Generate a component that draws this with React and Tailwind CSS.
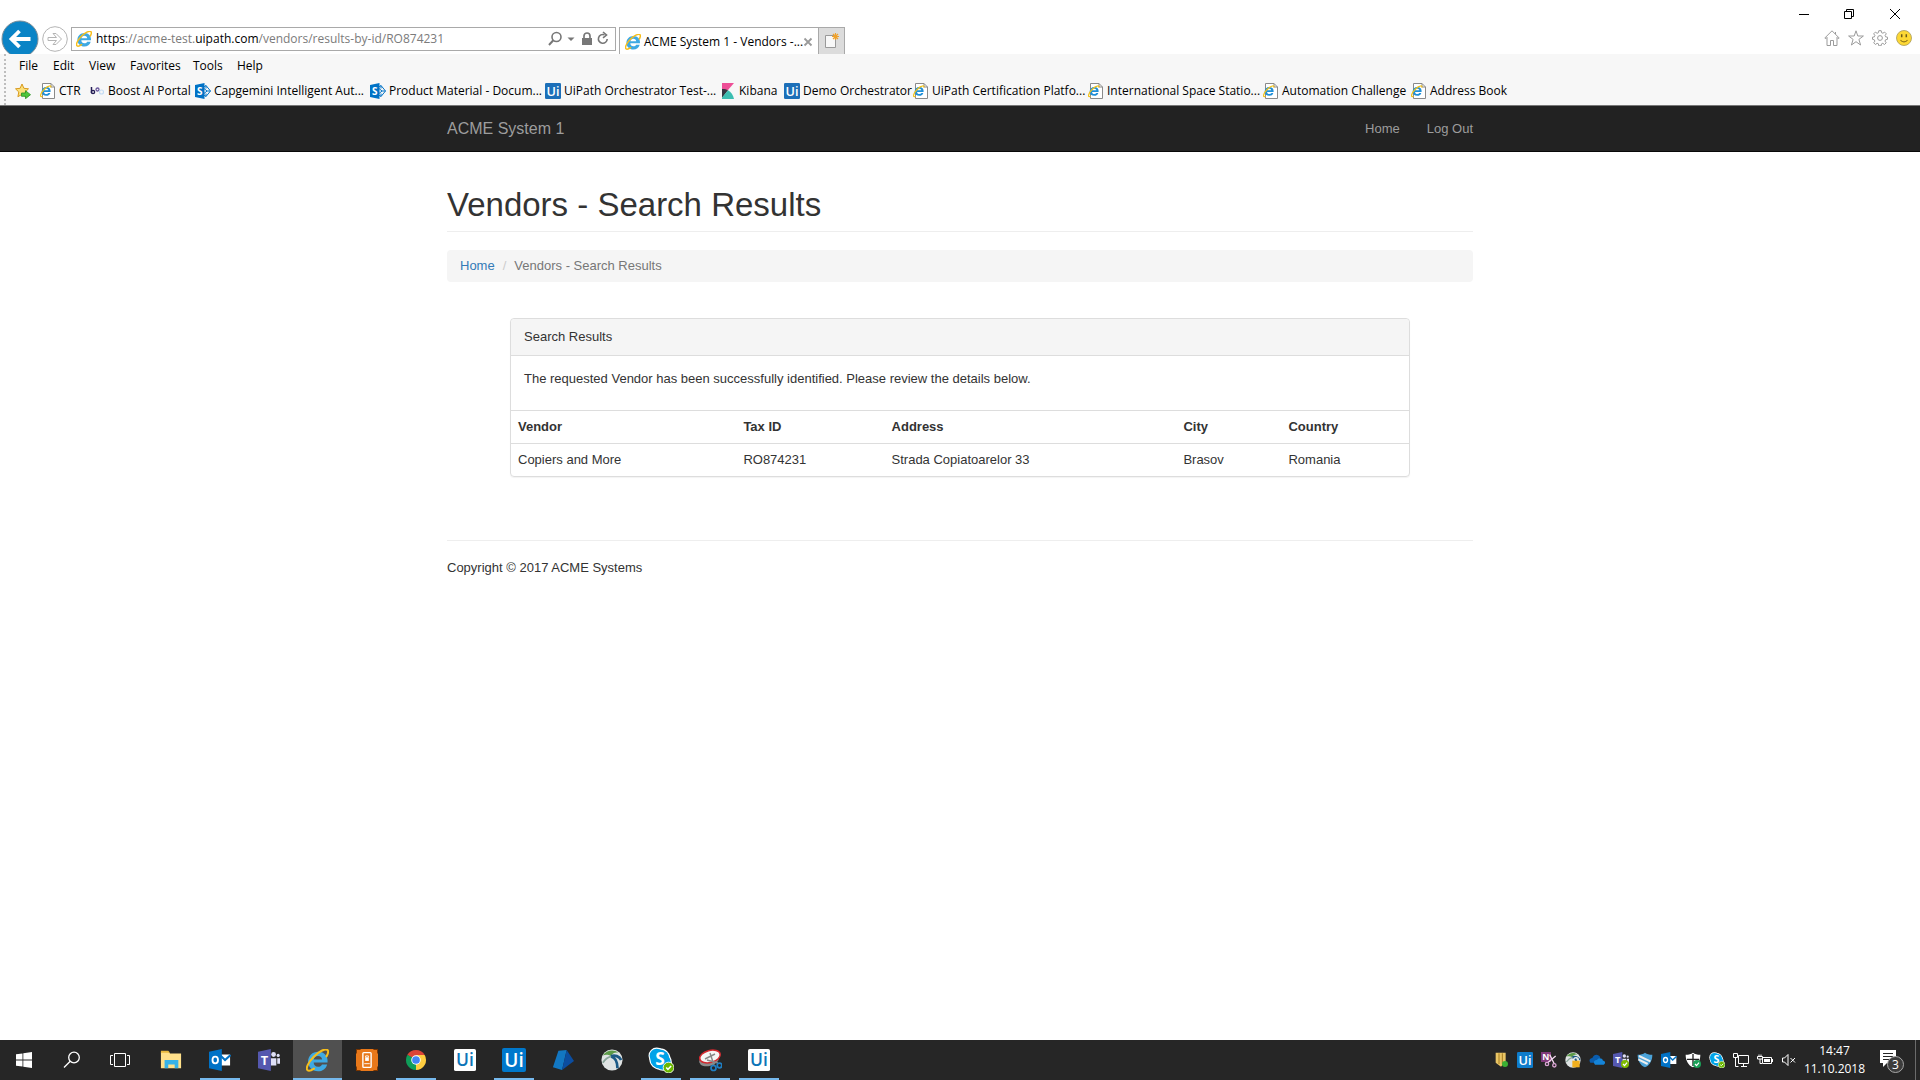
const menu = [
  ["File", "w-[34px]"],
  ["Edit", "w-[36px]"],
  ["View", "w-[41px]"],
  ["Favorites", "w-[63px]"],
  ["Tools", "w-[44px]"],
  ["Help", "w-[40px]"],
];

function IELogo({ className }) {
  return (
    <svg viewBox="1.5 1.5 21 21" className={className} aria-hidden="true">
      <path d="M20.8 15.600h-4.700c-.6 1.300-1.900 2.100-3.600 2.100-2.400 0-4-1.600-4-3.900h12.700c.6-5.800-2.900-9.800-8.600-9.800-5.200 0-9.200 3.800-9.200 9s3.800 8.900 9.100 8.900c4.100 0 7.300-2.300 8.300-6.300zM8.600 11c.3-2 1.800-3.200 3.900-3.200s3.600 1.200 3.700 3.200z" fill="#3ea9e3" />
      <path d="M20.300 8.200c1.700-3.300 1.700-5.300.6-6-1.900-1.200-7.600 1.500-12.300 6.300-5.100 5.200-7.500 10.600-5.800 12.300 1.200 1.200 3.500.4 6-1.300" fill="none" stroke="#f6bd1b" strokeWidth="1.900" strokeLinecap="round" />
    </svg>
  );
}

function PageIcon() {
  return (
    <svg viewBox="0 0 16 16" className="size-4 shrink-0" aria-hidden="true">
      <path d="M2.500.5h8.500l3.500 3.500v11.500h-12z" fill="#fff" stroke="#8a8a8a" />
      <path d="M11 .5V4h3.500" fill="none" stroke="#8a8a8a" />
      <path d="M10.300 9.900H8.400c-.4.700-1.100 1.100-2 1.100-1.400 0-2.300-.8-2.300-2.100h6.500c.3-3.100-1.500-4.900-4.300-4.900-2.700 0-4.600 1.800-4.600 4.400s1.900 4.400 4.600 4.400c2.100 0 3.600-1.100 4-2.900zM4.200 7.300C4.400 6.300 5.200 5.800 6.300 5.800s1.900.5 2 1.500z" fill="#1f8fd8" />
      <path d="M10.500 4.600c.7-1.600.2-2.100-1-1.700C6 3.900 1.500 8.500.6 12c-.4 1.600.5 1.900 2 1.200" fill="none" stroke="#f2c21a" strokeWidth="1.200" />
    </svg>
  );
}

function SharePoint() {
  return (
    <svg viewBox="0 0 16 16" className="size-4 shrink-0" aria-hidden="true">
      <path d="M9 4l2-1.500L15.500 8 11 13.500 9 12" fill="none" stroke="#0072c6" />
      <path d="M9 5.500l3 2.500-3 2.500M11 2.500v3M11 13.500v-3M12 8h3.500" fill="none" stroke="#0072c6" />
      <path d="M0 2l9.500-2v16L0 14z" fill="#0072c6" />
      <text x="2" y="11.500" fontSize="10" fontWeight="700" fill="#fff">S</text>
    </svg>
  );
}

function UiTile({ className, bg, fg }) {
  return (
    <svg viewBox="0 0 24 24" className={className} aria-hidden="true">
      <rect width="24" height="24" rx="2" fill={bg} />
      <text x="12" y="19" textAnchor="middle" fontSize="19" fontWeight="600" fill={fg}>Ui</text>
    </svg>
  );
}

function Kibana() {
  return (
    <svg viewBox="0 0 16 16" className="size-4 shrink-0" aria-hidden="true">
      <path d="M2 0h12L2 14z" fill="#ee4f97" />
      <path d="M2 6c3 0 4.500.5 6 1.300L2 15z" fill="#343741" />
      <path d="M8 7.300c3 1.700 5.300 5 6 8.700H2v-1.500z" fill="#3cbeb1" />
    </svg>
  );
}

function Boost() {
  return (
    <svg viewBox="0 0 16 16" className="size-4 shrink-0" aria-hidden="true" fill="none">
      <path d="M2.500 4v6" stroke="#241d55" strokeWidth="1.500" />
      <circle cx="4" cy="9" r="1.600" stroke="#241d55" strokeWidth="1.400" />
      <circle cx="8.500" cy="6.500" r="1.500" stroke="#69579c" strokeWidth="1.300" />
      <circle cx="12.500" cy="9" r="2" stroke="#c3dcf4" strokeWidth="1.200" />
    </svg>
  );
}

function AddFavorite() {
  return (
    <svg viewBox="0 0 16 16" className="size-4" aria-hidden="true">
      <path d="M7 1l1.900 4.300 4.600.5-3.400 3.200.9 4.700L7 11.400 2.900 13.700 3.800 9 .5 5.800l4.600-.5z" fill="#fbe07a" stroke="#d89b20" />
      <path d="M6.500 10h4V7.700l5 4-5 4v-2.400h-4z" fill="#4fc63b" stroke="#2b8f22" strokeWidth=".8" />
    </svg>
  );
}

const ui = <UiTile className="size-4 shrink-0" bg="#1c6fb8" fg="#fff" />;
const favorites = [
  ["CTR", "w-[49px]", <PageIcon />],
  ["Boost AI Portal", "w-[106px]", <Boost />],
  ["Capgemini Intelligent Aut...", "w-[175px]", <SharePoint />],
  ["Product Material - Docum...", "w-[175px]", <SharePoint />],
  ["UiPath Orchestrator Test-...", "w-[175px]", ui],
  ["Kibana", "w-[64px]", <Kibana />],
  ["Demo Orchestrator", "w-[129px]", ui],
  ["UiPath Certification Platfo...", "w-[175px]", <PageIcon />],
  ["International Space Statio...", "w-[175px]", <PageIcon />],
  ["Automation Challenge", "w-[148px]", <PageIcon />],
  ["Address Book", "w-[100px]", <PageIcon />],
];

function WindowHeader() {
  return (
    <div className="flex h-[54px] items-start overflow-hidden bg-white">
      <div className="flex min-w-0 flex-1 items-center pt-5">
        <button aria-label="Back" className="ml-px size-[38px] shrink-0">
          <svg viewBox="0 0 38 38" className="size-full">
            <circle cx="19" cy="19" r="18" fill="#0a84c6" stroke="#7c8e98" />
            <path d="M29.500 19H11M18.500 11L10.500 19l8 8" fill="none" stroke="#fff" strokeWidth="3.800" />
          </svg>
        </button>
        <button aria-label="Forward" className="ml-[3px] size-[26px] shrink-0">
          <svg viewBox="0 0 26 26" className="size-full" fill="none" stroke="#b4b4b4">
            <circle cx="13" cy="13" r="12.300" />
            <path d="M6 11.500h8.500l-3.500-4h3l5.500 5.500-5.500 5.500h-3l3.500-4H6z" />
          </svg>
        </button>
        <div className="ml-[3px] flex h-6 w-[545px] shrink-0 items-center border border-[#a9a9a9] bg-white pr-1 pl-1">
          <IELogo className="size-4" />
          <a href="#url" className="ml-1 flex-1 text-[12px] leading-4 text-[#7b7b7b]">
            <span className="text-black">https</span>://acme-test.<span className="text-black">uipath.com</span>/vendors/results-by-id/RO874231
          </a>
          <button aria-label="Search">
            <svg viewBox="0 0 16 16" className="size-4" fill="none" stroke="#777" strokeWidth="1.600">
              <circle cx="9.500" cy="6" r="4.500" />
              <path d="M6.300 9.300L2 14" strokeWidth="2" />
            </svg>
          </button>
          <button aria-label="Address list">
            <svg viewBox="0 0 16 16" className="size-4"><path d="M4.500 6.500h7L8 10z" fill="#777" /></svg>
          </button>
          <button aria-label="Security report">
            <svg viewBox="0 0 16 16" className="size-4">
              <rect x="3" y="7" width="10" height="7" fill="#777" />
              <path d="M5 7V5a3 3 0 0 1 6 0v2" fill="none" stroke="#777" strokeWidth="1.700" />
            </svg>
          </button>
          <button aria-label="Refresh">
            <svg viewBox="0 0 16 16" className="size-4" fill="none" stroke="#777" strokeWidth="1.600">
              <path d="M12.200 8a4.400 4.400 0 1 1-2.700-4.200" />
              <path d="M8 1l3.500 3L8 6.800" />
            </svg>
          </button>
        </div>
        <div className="mt-[7px] ml-[3px] flex h-[31px] w-[200px] shrink-0 items-start self-start border border-[#a9a9a9] bg-white pt-[6px] pr-[5px] pl-[5px]">
          <IELogo className="size-4 shrink-0" />
          <span className="ml-[3px] flex-1 text-[12px] leading-4 whitespace-nowrap text-black">ACME System 1 - Vendors -...</span>
          <button aria-label="Close tab">
            <svg viewBox="0 0 10 16" className="h-4 w-[10px]"><path d="M1.500 4.500l7 7M8.500 4.500l-7 7" stroke="#9a9a9a" strokeWidth="1.800" /></svg>
          </button>
        </div>
        <button aria-label="New tab" className="mt-[7px] flex h-[31px] w-[26px] shrink-0 items-start justify-center self-start border border-l-0 border-[#a9a9a9] bg-[#dcdcdc] pt-[5px]">
          <svg viewBox="0 0 16 16" className="size-4">
            <path d="M1.500 2.500h10v12h-10z" fill="#f8f8f8" stroke="#999" />
            <path d="M11.500 0v7M8 3.500h7M9 1l5 5M14 1L9 6" stroke="#f0a12a" strokeWidth="1.200" />
          </svg>
        </button>
      </div>
      <div className="flex shrink-0 flex-col items-end">
        <div className="mr-[2px] flex h-7">
          <button aria-label="Minimize" className="flex w-[45px] items-center justify-center">
            <svg viewBox="0 0 10 10" className="size-[10px]"><path d="M0 5.500h10" stroke="#000" /></svg>
          </button>
          <button aria-label="Restore" className="flex w-[46px] items-center justify-center">
            <svg viewBox="0 0 10 10" className="size-[10px]" fill="none" stroke="#000"><path d="M.5 2.500h7v7h-7zM2.500 2.500v-2h7v7h-2" /></svg>
          </button>
          <button aria-label="Close" className="flex w-[46px] items-center justify-center">
            <svg viewBox="0 0 10 10" className="size-[10px]"><path d="M0 0l10 10M10 0L0 10" stroke="#000" /></svg>
          </button>
        </div>
        <div className="flex gap-2 pt-[2px] pr-2">
          <button aria-label="Home page">
            <svg viewBox="0 0 16 16" className="size-4" fill="none" stroke="#9b9b9b"><path d="M.8 8L8 .8 15.200 8l-.8.800-1.400-1.400v8.100H9.500v-5h-3v5H3V7.400L1.600 8.800zM11.500 2v2" /></svg>
          </button>
          <button aria-label="Favorites">
            <svg viewBox="0 0 16 16" className="size-4" fill="none" stroke="#9b9b9b"><path d="M8 .8l1.800 5.200h5.600l-4.500 3.400 1.700 5.600L8 11.700 3.400 15l1.700-5.600L.6 6h5.600z" /></svg>
          </button>
          <button aria-label="Settings">
            <svg viewBox="0 0 16 16" className="size-4" fill="none" stroke="#9b9b9b">
              <path d="M6.800.7h2.400l.4 2 1.300.5 1.700-1.100 1.700 1.700-1.200 1.700.5 1.300 1.900.4v2.100l-2 .5-.5 1.300 1.200 1.700-1.700 1.700-1.700-1.200-1.300.6-.4 1.900H6.800l-.4-2-1.300-.5-1.700 1.200-1.700-1.700 1.200-1.700-.6-1.300-1.800-.5V7.200l1.900-.4.500-1.300L1.700 3.800l1.700-1.700 1.700 1.200 1.300-.6z" />
              <circle cx="8" cy="8" r="2.400" />
            </svg>
          </button>
          <button aria-label="Send a smile">
            <svg viewBox="0 0 16 16" className="size-4">
              <circle cx="8" cy="8" r="7.500" fill="#fdd835" stroke="#a89a5a" strokeWidth=".8" />
              <path d="M5.700 4.300v3M10.300 4.300v3" stroke="#6b5a1a" strokeWidth="1.500" />
              <path d="M4.500 10c1.500 2.500 5.500 2.500 7 0" fill="none" stroke="#8f7418" strokeWidth="1.100" />
            </svg>
          </button>
        </div>
      </div>
    </div>
  );
}

function Toolbars() {
  return (
    <div className="flex h-[52px] border-b border-[#777] bg-[#f7f7f7] text-[12px] leading-4 text-black">
      <div className="ml-1 border-l-2 border-dotted border-[#bdbdbd]" />
      <div className="flex min-w-0 flex-1 flex-col">
        <nav className="flex h-6 items-center pl-[13px]">
          {menu.map(([t, w]) => (
            <button key={t} className={"shrink-0 text-left " + w}>{t}</button>
          ))}
        </nav>
        <nav className="flex h-[26px] items-center pl-[9px] whitespace-nowrap">
          <button aria-label="Add to favorites bar" className="w-[25px] shrink-0"><AddFavorite /></button>
          {favorites.map(([t, w, icon]) => (
            <a key={t} href="#favorite" className={"flex shrink-0 items-center gap-[3px] " + w}>
              {icon}
              <span>{t}</span>
            </a>
          ))}
        </nav>
      </div>
    </div>
  );
}

function Site() {
  return (
    <div className="flex-1 bg-white font-['Liberation_Sans',Arial,sans-serif] text-[13px] leading-[18px] text-[#333]">
      <header className="h-[46px] border-b border-[#080808] bg-[#222] text-[#9d9d9d]">
        <div className="mx-auto flex h-full w-full max-w-[1026px] items-center justify-between">
          <a href="#home" className="text-[16px]">ACME System 1</a>
          <nav className="flex gap-[27px]">
            <a href="#home">Home</a>
            <a href="#logout">Log Out</a>
          </nav>
        </div>
      </header>
      <main className="mx-auto w-full max-w-[1026px]">
        <h1 className="border-b border-[#eee] pt-[35px] pb-2 text-[33px] leading-9">Vendors - Search Results</h1>
        <nav aria-label="Breadcrumb" className="mt-[18px] flex h-8 items-center rounded-[4px] bg-[#f5f5f5] px-[13px]">
          <a href="#home" className="text-[#337ab7]">Home</a>
          <span className="px-2 text-[#ccc]">/</span>
          <span className="text-[#777]">Vendors - Search Results</span>
        </nav>
        <section className="mx-[63px] mt-9 rounded-[4px] border border-[#ddd] shadow-[0_1px_1px_rgba(0,0,0,0.05)]">
          <h2 className="rounded-t-[4px] border-b border-[#ddd] bg-[#f5f5f5] px-[13px] py-[9px]">Search Results</h2>
          <p className="px-[13px] pt-[14px] pb-[22px]">The requested Vendor has been successfully identified. Please review the details below.</p>
          <table className="w-full table-fixed text-left">
            <colgroup>
              <col className="w-[25.1%]" />
              <col className="w-[16.5%]" />
              <col className="w-[32.5%]" />
              <col className="w-[11.7%]" />
              <col />
            </colgroup>
            <thead>
              <tr className="h-[33px] border-t border-[#ddd]">
                {["Vendor", "Tax ID", "Address", "City", "Country"].map((h) => (
                  <th key={h} className="px-[7px] font-bold">{h}</th>
                ))}
              </tr>
            </thead>
            <tbody>
              <tr className="h-8 border-t border-[#ddd]">
                {["Copiers and More", "RO874231", "Strada Copiatoarelor 33", "Brasov", "Romania"].map((d) => (
                  <td key={d} className="px-[7px]">{d}</td>
                ))}
              </tr>
            </tbody>
          </table>
        </section>
        <footer className="mt-[63px] border-t border-[#eee] pt-[18px]">Copyright © 2017 ACME Systems</footer>
      </main>
    </div>
  );
}

const white = "#fff";

function Svg({ children, className = "size-6" }) {
  return <svg viewBox="0 0 24 24" className={className} aria-hidden="true" fill="none">{children}</svg>;
}

const Outlook = ({ className }) => (
  <Svg className={className}>
    <path d="M12 6h11v12H12z" fill={white} />
    <path d="M12.500 7l5 5 6-5.500" stroke="#0072c6" strokeWidth="2.200" />
    <path d="M0 3l14-3v24L0 21z" fill="#0072c6" />
    <ellipse cx="6.800" cy="12" rx="3" ry="3.700" stroke={white} strokeWidth="2" />
  </Svg>
);
const Teams = ({ className, check }) => (
  <Svg className={className}>
    <circle cx="17" cy="6" r="2.600" fill="#dfe0f6" />
    <circle cx="22" cy="7" r="1.700" fill="#dfe0f6" />
    <path d="M14 10h6v8h-6zM21 10h3v6h-3z" fill="#dfe0f6" />
    <path d="M0 3l14-3v24L0 21z" fill="#5558af" />
    <text x="7" y="17" textAnchor="middle" fontSize="14" fontWeight="700" fill={white}>T</text>
    {check && <><circle cx="18" cy="18" r="6" fill="#7fba00" /><path d="M15 18l2.300 2.300L21 16" stroke={white} strokeWidth="1.800" /></>}
  </Svg>
);
const Skype = ({ className }) => (
  <Svg className={className}>
    <circle cx="8" cy="8" r="7.500" fill={white} />
    <circle cx="14" cy="14" r="8" fill={white} />
    <circle cx="11" cy="11" r="9.800" fill={white} />
    <circle cx="8" cy="8" r="6.500" fill="#00a3e8" />
    <circle cx="14" cy="14" r="7" fill="#00a3e8" />
    <circle cx="11" cy="11" r="8.800" fill="#00a3e8" />
    <text x="11" y="17" textAnchor="middle" fontSize="16" fontWeight="700" fill={white}>S</text>
    <circle cx="19" cy="19" r="5" fill="#6bb700" stroke={white} strokeWidth=".8" />
    <path d="M16.800 19l1.600 1.600 3-3" stroke={white} strokeWidth="1.400" />
  </Svg>
);
const Globe = ({ className, lock }) => (
  <Svg className={className}>
    <circle cx="12" cy="12" r="11.500" fill="#dfe3e3" />
    <path d="M2 7c4-6 12-7 17-3-4-1-7 1-8 4-3-2-6-2-9-1z" fill="#5c9a48" />
    <path d="M11 8c4 1 7 6 7 13M11 8c4-2 9 0 11 4" stroke="#1d5a86" strokeWidth="3" />
    <path d="M11 8c-4 1-7 4-9 7" stroke="#89a59a" strokeWidth="2" />
    {lock && <><path d="M13 14v-2a3 3 0 0 1 7 0v2" stroke="#eee" strokeWidth="2" /><rect x="11" y="13" width="11" height="10" fill="#f2b01e" /></>}
  </Svg>
);

const taskbar = [
  ["File Explorer", "", <Svg className="h-[22px] w-6"><path d="M1 3h8l2 2h12v16H1z" fill="#ffe08a" /><path d="M1 2h8l2 2H1z" fill="#e8b93e" /><path d="M5 21v-9h15v9h-4v-4H9v4z" fill="#36b3e8" /></Svg>],
  ["Outlook", "run", <Outlook className="size-[22px]" />],
  ["Teams", "", <Teams className="size-[22px]" />],
  ["Internet Explorer", "active", <IELogo className="size-[23px]" />],
  ["Phone lock", "", <Svg className="size-[22px]"><rect width="24" height="24" rx="4" fill="#e8781a" /><path d="M0 5V0h5M19 0h5v5M24 19v5h-5M5 24H0v-5" stroke="#7a3500" strokeWidth="2" /><rect x="7.500" y="4" width="9" height="16" rx="1" stroke={white} strokeWidth="1.500" /><rect x="10" y="9" width="4" height="4" fill={white} /><path d="M10.500 9V7.500h3V9M9 16h6" stroke={white} /></Svg>],
  ["Chrome", "run", <Svg className="size-[22px]"><path d="M12 12L2.500 6.500A11 11 0 0 1 21.500 6.500z" fill="#db4437" /><path d="M12 12L2.500 6.500A11 11 0 0 0 12 23z" fill="#0f9d58" /><path d="M12 12h0L21.500 6.500A11 11 0 0 1 12 23z" fill="#ffcd40" /><path d="M12 6.500h9.500L17 14z" fill="#ffcd40" /><path d="M7 14.500L2.500 6.500l6 3z" fill="#0f9d58" /><circle cx="12" cy="12" r="5.200" fill={white} /><circle cx="12" cy="12" r="4.200" fill="#4285f4" /></Svg>],
  ["UiPath Robot", "", <UiTile className="size-[22px]" bg="#fff" fg="#0d75b8" />],
  ["UiPath Studio", "run", <UiTile className="size-6" bg="#0078cc" fg="#fff" />],
  ["Blue Prism", "", <Svg className="size-[22px]"><path d="M7 2l9-1-5 22-10-3z" fill="#1277c2" /><path d="M16 1l8 12-13 10z" fill="#0b4da0" /></Svg>],
  ["AnyConnect", "", <Globe className="size-[22px]" />],
  ["Skype for Business", "run", <Skype className="size-[26px]" />],
  ["Snipping Tool", "run", <Svg className="size-6"><ellipse cx="11" cy="12" rx="10" ry="6" fill="#8b8b8b" transform="rotate(-15 11 12)" /><ellipse cx="12" cy="8.500" rx="10.500" ry="6" fill="#f5f5f5" stroke="#d4292f" strokeWidth="1.500" transform="rotate(-15 12 8.500)" /><path d="M7 11l10-5M12 5l4 12M9 12l11 3" stroke="#888" strokeWidth="1.400" /><circle cx="15.500" cy="20" r="2.500" stroke="#1f7fc4" strokeWidth="1.700" /><circle cx="21.500" cy="17.500" r="2.300" stroke="#1f7fc4" strokeWidth="1.700" /></Svg>],
  ["UiPath Assistant", "run", <UiTile className="size-[22px]" bg="#fff" fg="#0d75b8" />],
];

const tray = [
  ["Policy shield", <Svg className="size-4"><path d="M4 1h15v13l-7 8-8-6z" fill="#e9c565" /><path d="M9 2v16M14 2v16" stroke="#a37b1e" strokeWidth="1.500" /><circle cx="18" cy="18" r="4.500" fill="#3cb034" /></Svg>],
  ["UiPath", <UiTile className="size-4" bg="#0e7ccb" fg="#fff" />],
  ["OneNote clip", <Svg className="size-4"><rect width="15" height="15" fill="#80397b" /><text x="7" y="12" textAnchor="middle" fontSize="13" fontWeight="700" fill={white}>N</text><path d="M13 4l7 14M22 6L10 16" stroke="#f2d8ee" strokeWidth="2" /><circle cx="9" cy="18" r="2.500" stroke="#d9a3d2" strokeWidth="2" /><circle cx="20" cy="20" r="2.500" stroke="#d9a3d2" strokeWidth="2" /></Svg>],
  ["VPN", <Globe className="size-4" lock />],
  ["OneDrive", <Svg className="size-4"><path d="M2 16c-3-4 0-7 3-7 2-6 9-7 12-1l-5 8z" fill="#0a5cad" /><path d="M9 19c-4-4 0-8 3-7 2-4 8-3 9 1 4 0 4 5 1 6z" fill="#1584d8" /></Svg>],
  ["Teams", <Teams className="size-4" check />],
  ["Security", <Svg className="size-4"><path d="M1 4c5 0 8-1 11-3 3 2 6 3 11 3 0 9-4 16-11 19C5 20 1 13 1 4z" fill="#4ba3d9" /><path d="M3 6l17 8M2 11l14 7" stroke="#eee" strokeWidth="3" /></Svg>],
  ["Outlook", <Outlook className="size-4" />],
  ["Windows Defender", <Svg className="size-4"><path d="M1 4c5 0 8-1 11-3 3 2 6 3 11 3 0 9-4 16-11 19C5 20 1 13 1 4z" fill={white} /><path d="M12 3v18M3 11h18" stroke="#222" strokeWidth="2" /><circle cx="18" cy="18" r="6" fill="#1ba158" /><path d="M15 18l2.300 2.300L21 16" stroke={white} strokeWidth="1.800" /></Svg>],
  ["Skype", <Skype className="size-4" />],
  ["Network", <svg viewBox="0 0 16 16" className="size-4" fill="none" stroke="#fff"><path d="M5.500 3.500h10v8h-10zM8 14.500h6M10.500 11.500v3M.5 1.500h4v4h-4zM2.500 5.500v9h3" /></svg>],
  ["Power", <svg viewBox="0 0 16 16" className="size-4" fill="none" stroke="#fff"><path d="M5.500 5.500h9v6h-9zM15.500 7v3M.5 4.500h5v2.500h-5zM2 2.500v2M4 2.500v2M3 7v4.500h2" /><path d="M7 7h6v3H7z" fill="#fff" stroke="none" /></svg>],
  ["Volume muted", <svg viewBox="0 0 16 16" className="size-4" fill="none" stroke="#fff"><path d="M1.500 6v4h2l3.500 3.500v-11L3.500 6zM9.500 6l4.500 4.500M14 6L9.500 10.500" /></svg>],
];

function Taskbar() {
  return (
    <footer className="flex h-10 shrink-0 bg-[#262626] text-white">
      <button aria-label="Start" className="flex w-12 items-center justify-center">
        <svg viewBox="0 0 16 16" className="size-4" fill="#fff"><path d="M0 2.300L6.500 1.400v6.200H0zM7.300 1.300L16 0v7.600H7.300zM0 8.400h6.500v6.200L0 13.700zM7.300 8.400H16V16l-8.700-1.300z" /></svg>
      </button>
      <button aria-label="Search" className="flex w-12 items-center justify-center">
        <svg viewBox="0 0 18 18" className="size-[18px]" fill="none" stroke="#fff" strokeWidth="1.300"><circle cx="11" cy="6.500" r="5.300" /><path d="M7.200 10.300L1 16.500" /></svg>
      </button>
      <button aria-label="Task View" className="flex w-[50px] items-center pl-[14px]">
        <svg viewBox="0 0 20 14" className="h-[14px] w-5" fill="none" stroke="#fff"><path d="M4.500.5h11v13h-11zM3 2.500H.5v9H3M17 2.500h2.500v9H17" /></svg>
      </button>
      {taskbar.map(([name, state, icon]) => (
        <button
          key={name}
          aria-label={name}
          className={"flex w-[49px] flex-col items-center " + (state === "active" ? "bg-[#505050]" : "")}
        >
          <span className="flex h-[38px] items-center pt-[2px]">{icon}</span>
          {state === "run" && <span className="h-[2px] w-10 bg-[#76b9ed]" />}
          {state === "active" && <span className="h-[2px] w-full bg-[#76b9ed]" />}
        </button>
      ))}
      <div className="ml-auto flex items-center">
        <div className="flex gap-2">
          {tray.map(([name, icon]) => (
            <button key={name} aria-label={name}>{icon}</button>
          ))}
        </div>
        <button className="w-[75px] text-center text-[12px] leading-[18px]">14:47<br />11.10.2018</button>
        <button aria-label="Notifications" className="ml-[3px] flex w-8 justify-center">
          <svg viewBox="0 0 26 26" className="size-[26px]">
            <path d="M2 3h16v13H9l-4 4v-4H2z" fill="#fff" />
            <path d="M5 6.500h10M5 9.500h10M5 12.500h7" stroke="#262626" />
            <circle cx="17.500" cy="17.500" r="8" fill="#3c3c3c" stroke="#a8a8a8" />
            <text x="17.500" y="21.500" textAnchor="middle" fontSize="12" fill="#fff">3</text>
          </svg>
        </button>
        <div className="ml-2 h-10 w-[5px] border-l border-[#6b6b6b]" />
      </div>
    </footer>
  );
}

export default function App() {
  return (
    <div className="flex min-h-screen flex-col font-['Open_Sans','Noto_Sans',sans-serif]">
      <WindowHeader />
      <Toolbars />
      <Site />
      <Taskbar />
    </div>
  );
}
